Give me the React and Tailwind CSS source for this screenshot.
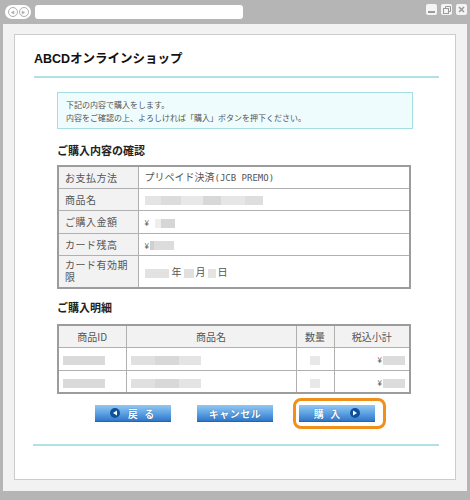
import React from 'react'

const jp = { fontFamily: '"Noto Sans CJK JP", "Noto Sans", sans-serif' }

function Blur({ className }) {
  return <span className={`inline-block h-[9px] align-middle ${className}`} />
}

function Btn({ children, track = 'tracking-[2px]' }) {
  return (
    <div className={`w-[76px] h-[17px] flex items-center justify-center gap-[8px] bg-gradient-to-b from-[#92c7f1] via-[#5ea3e3] to-[#3077c8] text-white text-[10px] font-bold ${track} [text-shadow:0_0_1px_#1d4f8f] border-b border-[#2a64a8]`}>
      {children}
    </div>
  )
}

function Dot({ dir }) {
  return (
    <span className="w-[10px] h-[10px] rounded-full bg-[#0f4f9c] flex items-center justify-center">
      <svg width="6" height="6" viewBox="0 0 6 6">
        {dir === 'left' ? <path d="M1 3 L5 0.5 L5 5.5 Z" fill="#fff" /> : <path d="M5 3 L1 0.5 L1 5.5 Z" fill="#fff" />}
      </svg>
    </span>
  )
}

export default function App() {
  return (
    <div className="w-[470px] h-[500px] bg-[#b5b5b5] flex flex-col" style={jp}>
      {/* browser chrome */}
      <div className="h-[24px] flex items-start pt-[5px] px-[5px]">
        <div className="w-[26px] h-[14px] rounded-full bg-white flex items-center justify-center gap-[1px]">
          {['left', 'right'].map(d => (
            <span key={d} className="w-[10px] h-[10px] rounded-full border-[1.5px] border-[#b0b0b0] flex items-center justify-center">
              <svg width="5" height="5" viewBox="0 0 6 6">
                {d === 'left' ? <path d="M1 3 L5 0.5 L5 5.5 Z" fill="#b0b0b0" /> : <path d="M5 3 L1 0.5 L1 5.5 Z" fill="#b0b0b0" />}
              </svg>
            </span>
          ))}
        </div>
        <div className="ml-[4px] w-[208px] h-[14px] rounded-[3px] bg-white" />
        <div className="ml-auto mr-[-2px] mt-[-1px] flex gap-[4px]">
          <span className="w-[11px] h-[11px] rounded-[2px] bg-[#f4f4f4] flex items-end justify-center pb-[2px]">
            <span className="w-[7px] h-[2px] bg-[#9a9a9a]" />
          </span>
          <span className="w-[11px] h-[11px] rounded-[2px] bg-[#f4f4f4] flex items-center justify-center">
            <svg width="8" height="8" viewBox="0 0 8 8" fill="none" stroke="#9a9a9a" strokeWidth="1">
              <rect x="0.5" y="2.5" width="5" height="5" />
              <path d="M2.5 2.5 V0.5 H7.5 V5.5 H5.5" />
            </svg>
          </span>
          <span className="w-[11px] h-[11px] rounded-[2px] bg-[#f4f4f4] flex items-center justify-center">
            <svg width="7" height="7" viewBox="0 0 7 7" stroke="#9a9a9a" strokeWidth="1.6">
              <path d="M1 1 L6 6 M6 1 L1 6" />
            </svg>
          </span>
        </div>
      </div>

      {/* page area */}
      <div className="mx-[3px] h-[467px] bg-[#f2f2f2] pt-[10px] pl-[11px] pr-[10px]">
        <div className="w-[442px] h-[446px] bg-white border border-[#cccccc] pt-[14px] px-[19px] flex flex-col">
          <h1 className="text-[12.5px] leading-[20px] font-bold text-[#111]" style={{ fontFamily: '"Liberation Sans", "Noto Sans CJK JP", sans-serif' }}>
            ABCDオンラインショップ
          </h1>
          <div className="mt-[7px] h-[2px] w-[405px] bg-[#b2e0e9]" />

          <div className="mt-[14px] ml-[23px] w-[356px] h-[37px] border border-[#a6dce6] bg-[#effcfd] pl-[8px] pt-[5px] text-[8px] leading-[13px] text-[#555]">
            <p>下記の内容で購入をします。</p>
            <p>内容をご確認の上、よろしければ「購入」ボタンを押下ください。</p>
          </div>

          <div className="ml-[23px] w-[354px]">
            <h2 className="mt-[14px] text-[11px] leading-[14px] font-bold text-[#222]">ご購入内容の確認</h2>
            <table className="mt-[8px] w-[354px] table-fixed border-collapse border-2 border-[#9c9c9c] text-[10px] text-[#555]">
              <colgroup>
                <col className="w-[80px]" />
                <col />
              </colgroup>
              <tbody>
                <tr className="h-[22px]">
                  <td className="bg-[#f2f2f2] border border-[#b0b0b0] pl-[6px] tracking-[0.5px]">お支払方法</td>
                  <td className="border border-[#b0b0b0] pl-[6px]">
                    プリペイド決済<span className="text-[9px]" style={{ fontFamily: '"DejaVu Sans Mono", monospace' }}>(JCB PREMO)</span>
                  </td>
                </tr>
                <tr className="h-[22px]">
                  <td className="bg-[#f2f2f2] border border-[#b0b0b0] pl-[6px] tracking-[0.5px]">商品名</td>
                  <td className="border border-[#b0b0b0] pl-[6px]">
                    <Blur className="w-[16px] bg-[#e4e4e4]" />
                    <Blur className="w-[20px] bg-[#dcdcdc]" />
                    <Blur className="w-[22px] bg-[#e8e8e8]" />
                    <Blur className="w-[18px] bg-[#d8d8d8]" />
                    <Blur className="w-[24px] bg-[#e6e6e6]" />
                    <Blur className="w-[18px] bg-[#dedede]" />
                  </td>
                </tr>
                <tr className="h-[23px]">
                  <td className="bg-[#f2f2f2] border border-[#b0b0b0] pl-[6px] tracking-[0.5px]">ご購入金額</td>
                  <td className="border border-[#b0b0b0] pl-[6px]">
                    <span className="text-[8px]">¥</span>
                    <Blur className="ml-[6px] w-[6px] bg-[#eeeeee]" />
                    <Blur className="w-[14px] bg-[#d6d6d6]" />
                  </td>
                </tr>
                <tr className="h-[22px]">
                  <td className="bg-[#f2f2f2] border border-[#b0b0b0] pl-[6px] tracking-[0.5px]">カード残高</td>
                  <td className="border border-[#b0b0b0] pl-[6px]">
                    <span className="text-[8px]">¥</span>
                    <Blur className="ml-[1px] w-[4px] bg-[#cfcfcf]" />
                    <Blur className="w-[20px] bg-[#dcdcdc]" />
                  </td>
                </tr>
                <tr className="h-[33px]">
                  <td className="bg-[#f2f2f2] border border-[#b0b0b0] pl-[6px] leading-[12px] tracking-[0.5px]">
                    <span className="block">カード有効期</span>
                    <span className="block">限</span>
                  </td>
                  <td className="border border-[#b0b0b0] pl-[6px]">
                    <Blur className="w-[24px] bg-[#e2e2e2]" />
                    <span className="ml-[3px]">年</span>
                    <Blur className="ml-[2px] w-[10px] bg-[#e0e0e0]" />
                    <span className="ml-[2px]">月</span>
                    <Blur className="ml-[2px] w-[8px] bg-[#e4e4e4]" />
                    <span className="ml-[2px]">日</span>
                  </td>
                </tr>
              </tbody>
            </table>

            <h2 className="mt-[11px] text-[11px] leading-[14px] font-bold text-[#222]">ご購入明細</h2>
            <table className="mt-[10px] w-[354px] table-fixed border-collapse border-2 border-[#9c9c9c] text-[10px] text-[#555]">
              <colgroup>
                <col className="w-[68px]" />
                <col className="w-[170px]" />
                <col className="w-[38px]" />
                <col />
              </colgroup>
              <tbody>
                <tr className="h-[22px] bg-[#f2f2f2] text-center">
                  <td className="border border-[#b0b0b0]">商品ID</td>
                  <td className="border border-[#b0b0b0]">商品名</td>
                  <td className="border border-[#b0b0b0]">数量</td>
                  <td className="border border-[#b0b0b0]">税込小計</td>
                </tr>
                {[0, 1].map(i => (
                  <tr key={i} className="h-[23px]">
                    <td className="border border-[#b0b0b0] pl-[4px]">
                      <Blur className="w-[42px] bg-[#dadada]" />
                    </td>
                    <td className="border border-[#b0b0b0] pl-[4px]">
                      <Blur className="w-[24px] bg-[#e0e0e0]" />
                      <Blur className="w-[24px] bg-[#d8d8d8]" />
                      <Blur className="w-[22px] bg-[#e4e4e4]" />
                    </td>
                    <td className="border border-[#b0b0b0] text-center">
                      <Blur className="w-[10px] bg-[#e8e8e8]" />
                    </td>
                    <td className="border border-[#b0b0b0] text-right pr-[4px]">
                      <span className="text-[8px]">¥</span>
                      <Blur className="ml-[1px] w-[22px] bg-[#dcdcdc]" />
                    </td>
                  </tr>
                ))}
              </tbody>
            </table>
          </div>

          <div className="mt-[11px] flex justify-center gap-[26px]">
            <Btn>
              <Dot dir="left" />
              <span>戻 る</span>
            </Btn>
            <Btn track="tracking-[0.5px]">キャンセル</Btn>
            <div className="relative">
              <span className="absolute -left-[6px] -right-[11px] -top-[7px] -bottom-[7px] border-[3px] border-[#f0901a] rounded-[8px]" />
              <Btn>
                <span>購 入</span>
                <Dot dir="right" />
              </Btn>
            </div>
          </div>

          <div className="mt-[22px] h-[2px] w-[406px] -ml-[1px] bg-[#b2e0e9]" />
        </div>
      </div>
    </div>
  )
}
